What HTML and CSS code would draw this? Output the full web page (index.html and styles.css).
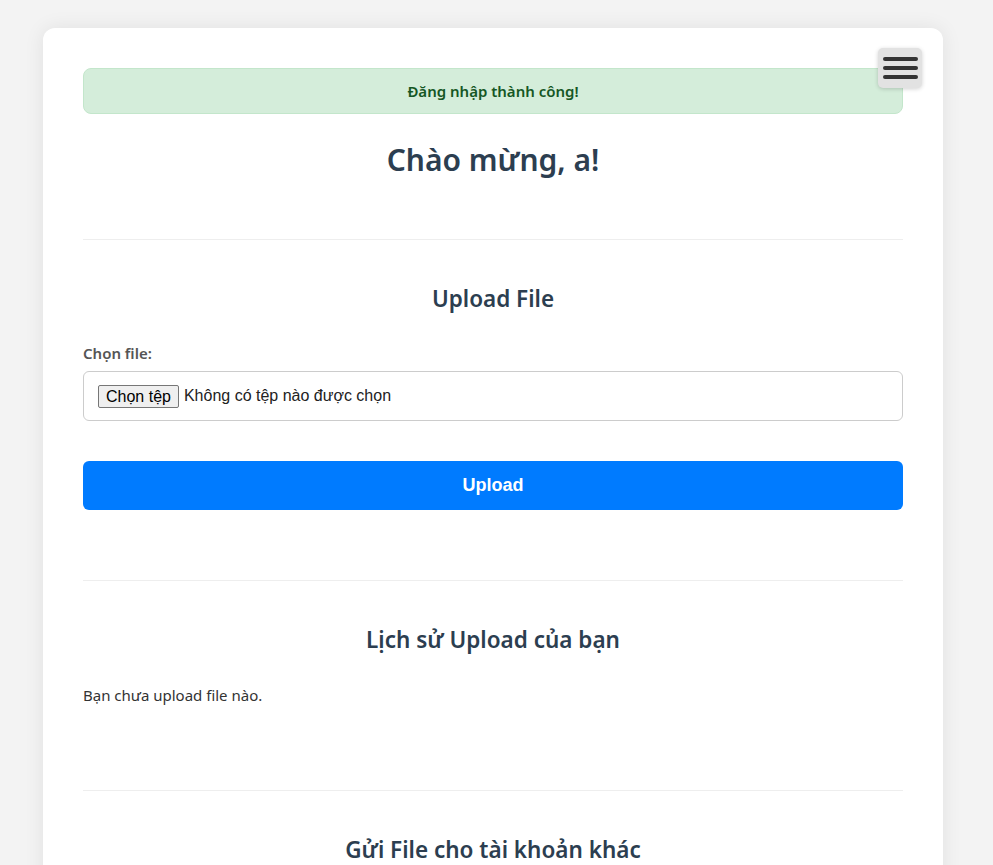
FILE: index.html
```html
<!DOCTYPE html>
<html lang="vi">
<head>
<meta charset="utf-8">
<title>Trang chủ</title>
<link rel="stylesheet" href="styles.css">
</head>
<body>
<main class="card">
  <button class="menu-toggle" aria-label="Menu">
    <span class="bar"></span><span class="bar"></span><span class="bar"></span>
  </button>

  <div class="alert-success">Đăng nhập thành công!</div>
  <h1 class="welcome">Chào mừng, a!</h1>

  <hr class="divider">

  <section class="section upload">
    <h2 class="section-title">Upload File</h2>
    <form class="upload-form">
      <label class="field-label">Chọn file:</label>
      <div class="file-box">
        <span class="file-btn">Chọn tệp</span>
        <span class="file-text">Không có tệp nào được chọn</span>
      </div>
      <button type="button" class="btn-primary">Upload</button>
    </form>
  </section>

  <hr class="divider">

  <section class="section history">
    <h2 class="section-title">Lịch sử Upload của bạn</h2>
    <p class="empty">Bạn chưa upload file nào.</p>
  </section>

  <hr class="divider">

  <section class="section send">
    <h2 class="section-title">Gửi File cho tài khoản khác</h2>
  </section>
</main>
</body>
</html>
```

FILE: styles.css
```css
html, body {
  margin: 0;
  padding: 0;
  overflow: hidden;
}

body {
  background: #f3f3f3;
  font-family: "Noto Sans", "Open Sans", sans-serif;
  color: #333;
  padding: 28px 50px 0 43px;
}

.card {
  position: relative;
  width: 900px;
  box-sizing: border-box;
  background: #fff;
  border-radius: 12px;
  box-shadow: 0 0 20px rgba(0, 0, 0, 0.08);
  padding: 40px 40px 60px;
}

.menu-toggle {
  position: absolute;
  top: 20px;
  right: 21px;
  width: 44px;
  height: 40px;
  padding: 0;
  border: none;
  border-radius: 5px;
  background: #e2e2e2;
  box-shadow: 0 1px 4px rgba(0, 0, 0, 0.18);
  display: flex;
  flex-direction: column;
  align-items: center;
  justify-content: center;
  gap: 5px;
}

.menu-toggle .bar {
  display: block;
  width: 35px;
  height: 4px;
  border-radius: 2px;
  background: #333;
}

.alert-success {
  background: #d4edda;
  border: 1px solid #c3e6cb;
  color: #155724;
  border-radius: 8px;
  text-align: center;
  font-weight: 600;
  font-size: 15px;
  line-height: 22px;
  padding: 11px 12px;
  margin-bottom: 27px;
}

.welcome {
  margin: 0 0 60px;
  text-align: center;
  color: #2c3e50;
  font-size: 30px;
  line-height: 38px;
  font-weight: 600;
}

.divider {
  border: 0;
  border-top: 1px solid #eee;
  margin: 0;
}

.section {
  padding-top: 44px;
}

.section.upload {
  padding-bottom: 70px;
}

.section.history {
  padding-bottom: 84px;
}

.section-title {
  margin: 0 0 30px;
  text-align: center;
  color: #2c3e50;
  font-size: 22.5px;
  line-height: 29px;
  font-weight: 600;
}

.upload-form {
  display: flex;
  flex-direction: column;
}

.field-label {
  display: block;
  font-weight: 600;
  color: #555;
  font-size: 15px;
  line-height: 20px;
  margin-bottom: 8px;
}

.file-box {
  display: flex;
  align-items: center;
  gap: 5px;
  height: 50px;
  box-sizing: border-box;
  border: 1px solid #ccc;
  border-radius: 6px;
  padding: 0 14px;
  font-family: "Liberation Sans", Arial, sans-serif;
  font-size: 16px;
  color: #222;
}

.file-btn {
  background: #efefef;
  border: 1px solid #767676;
  border-radius: 2px;
  padding: 1px 7px;
  line-height: 19px;
  color: #000;
}

.btn-primary {
  margin-top: 40px;
  height: 49px;
  border: none;
  border-radius: 6px;
  background: #007bff;
  color: #fff;
  font-family: "Liberation Sans", Arial, sans-serif;
  font-weight: 700;
  font-size: 18px;
}

.empty {
  margin: 0;
  font-size: 15px;
  line-height: 22px;
  color: #333;
}
```
